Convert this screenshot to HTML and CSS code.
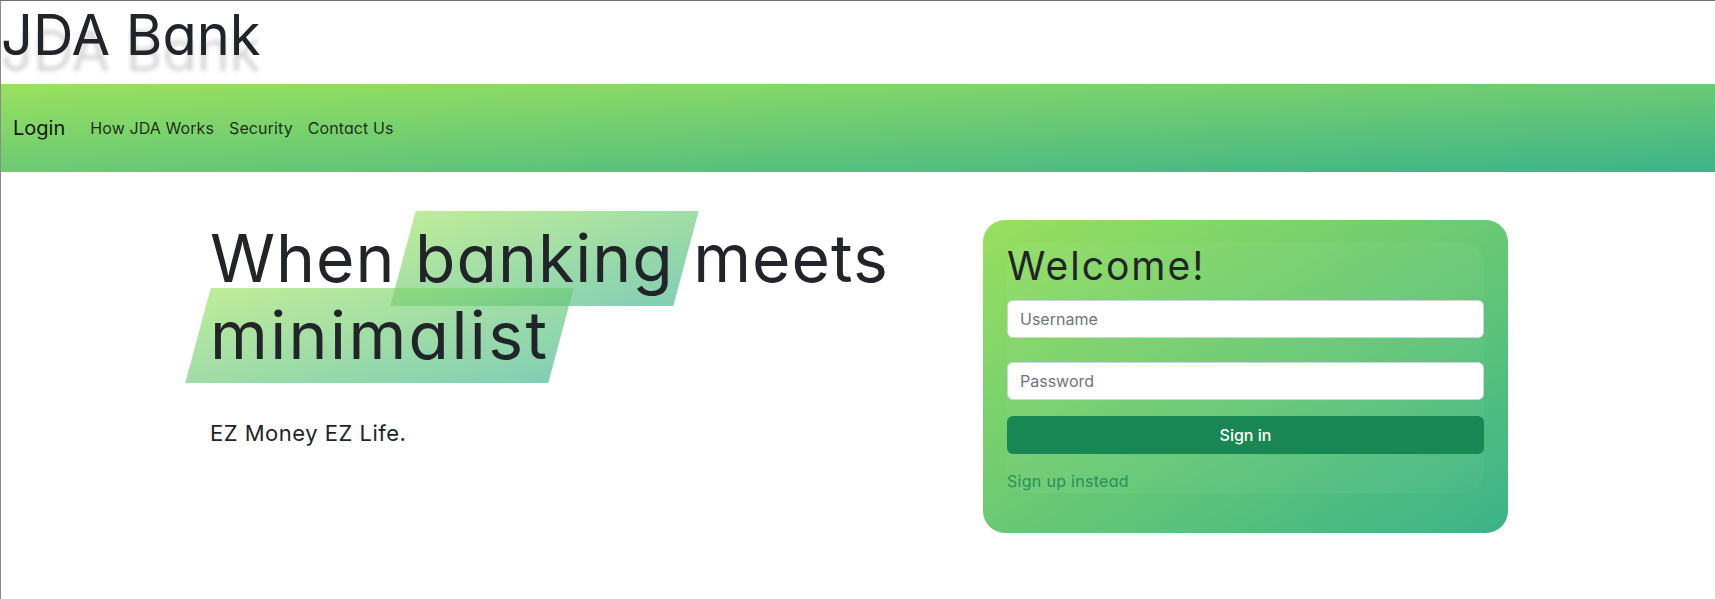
FILE: index.html
```html
<!DOCTYPE html>
<html lang="en">
<head>
<meta charset="utf-8">
<title>JDA Bank</title>
<link rel="stylesheet" href="styles.css">
</head>
<body>
<div class="frame">
  <header class="masthead">
    <h1 class="site-title">JDA Bank</h1>
  </header>
  <nav class="navbar">
    <a class="nav-brand" href="#">Login</a>
    <ul class="nav-links">
      <li><a href="#">How JDA Works</a></li>
      <li><a href="#">Security</a></li>
      <li><a href="#">Contact Us</a></li>
    </ul>
  </nav>
  <main class="hero">
    <section class="hero-copy">
      <h2 class="headline">When <span class="hl">banking</span> meets<br><span class="hl hl-wide">minimalist</span></h2>
      <p class="tagline">EZ Money EZ Life.</p>
    </section>
    <section class="login-card">
      <form class="login-form">
        <h3 class="welcome">Welcome!</h3>
        <input class="field" type="text" placeholder="Username">
        <input class="field field-last" type="password" placeholder="Password">
        <button class="btn-signin" type="button">Sign in</button>
        <a class="signup-link" href="#">Sign up instead</a>
      </form>
    </section>
  </main>
</div>
</body>
</html>
```
FILE: styles.css
```css
* { box-sizing: border-box; }
html, body { margin: 0; padding: 0; background: #fff; }
body {
  font-family: Inter, "Open Sans", sans-serif;
  font-feature-settings: "cv11" 1;
  color: #212529;
}
.frame {
  border-top: 1px solid #707070;
  border-left: 1px solid #8a8a8a;
  min-height: 599px;
}
.masthead { height: 83px; }
.site-title {
  margin: 0;
  font-size: 56px;
  font-weight: 400;
  line-height: normal;
  color: #212529;
  text-shadow: 0 16px 4px rgba(0, 0, 0, 0.16);
}
.navbar {
  height: 88px;
  display: flex;
  align-items: center;
  padding: 0 12px;
  background: linear-gradient(to bottom right, #9ae15e, #3cb38a);
}
.nav-brand {
  font-size: 20px;
  color: rgba(0, 0, 0, 0.9);
  text-decoration: none;
  margin-right: 17px;
}
.nav-links { display: flex; list-style: none; margin: 0; padding: 0; }
.nav-links a {
  display: block;
  padding: 8px 7px 8px 8px;
  font-size: 16px;
  letter-spacing: 0.1px;
  color: rgba(0, 0, 0, 0.8);
  text-decoration: none;
}
.hero {
  display: flex;
  align-items: flex-start;
  padding: 48px 0 0 209px;
}
.hero-copy { width: 773px; }
.headline {
  position: relative;
  z-index: 0;
  margin: 0;
  font-size: 66px;
  font-weight: 400;
  line-height: 77px;
  letter-spacing: 1px;
  color: #212529;
}
.hl { position: relative; }
.hl-wide { letter-spacing: 2.4px; }
.hl::before {
  content: "";
  position: absolute;
  z-index: -1;
  top: -7px;
  bottom: -8px;
  left: -12px;
  right: -12px;
  transform: skewX(-15deg);
  background: linear-gradient(to bottom right, #9ae15e, #3cb38a);
  opacity: 0.64;
}
.tagline {
  margin: 43px 0 0;
  font-size: 22px;
  line-height: 33px;
  letter-spacing: 0.5px;
  color: #212529;
}
.login-card {
  width: 525px;
  padding: 23px 24px 40px;
  border-radius: 22px;
  background: linear-gradient(to bottom right, #98e05e, #3bb389);
}
.login-form {
  display: flex;
  flex-direction: column;
  border-radius: 20px;
  background: rgba(255, 255, 255, 0.04);
}
.welcome {
  margin: 0 0 10px;
  font-size: 39px;
  font-weight: 400;
  line-height: 1.2;
  letter-spacing: 2px;
  color: #212529;
}
.field {
  height: 38px;
  margin: 0 0 24px;
  padding: 6px 12px;
  border: 1px solid #ced4da;
  border-radius: 6px;
  background: #fff;
  font-family: inherit;
  font-size: 16px;
  color: #212529;
}
.field::placeholder { color: #6c757d; }
.field-last { margin-bottom: 16px; }
.btn-signin {
  height: 38px;
  border: 0;
  border-radius: 6px;
  background: #198754;
  color: #fff;
  font-family: inherit;
  font-size: 16px;
  font-weight: 500;
}
.signup-link {
  margin-top: 15px;
  font-size: 16px;
  line-height: 24px;
  letter-spacing: 0.3px;
  color: #198754;
  opacity: 0.85;
  text-decoration: none;
}
```
